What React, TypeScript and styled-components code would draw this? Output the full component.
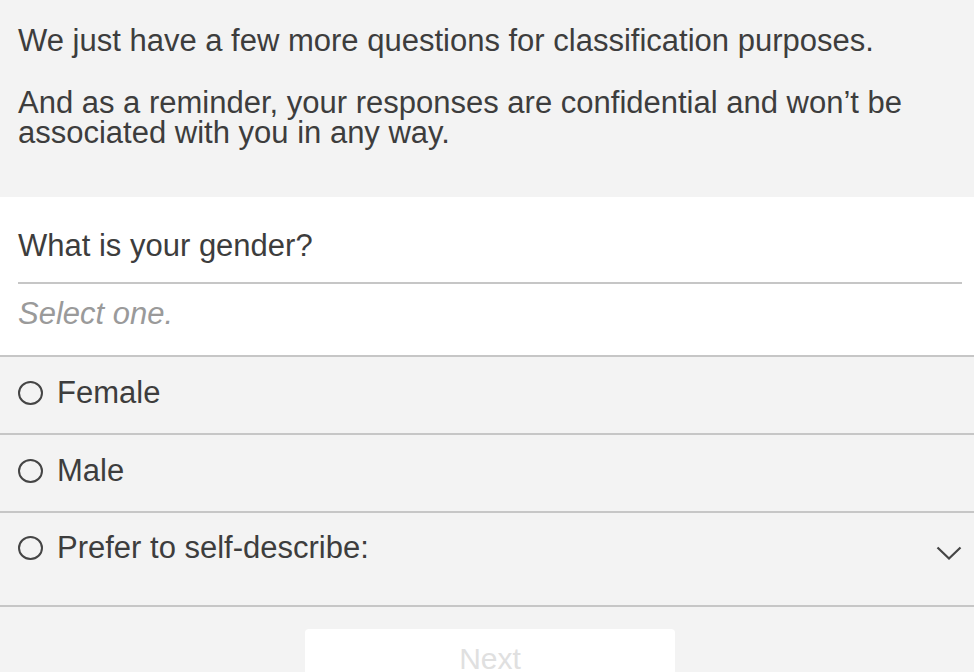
import React from "react";
import styled, { createGlobalStyle } from "styled-components";

const GlobalStyle = createGlobalStyle`
  html, body {
    margin: 0;
    padding: 0;
    background: #f3f3f3;
  }
  body {
    font-family: "Liberation Sans", Arial, Helvetica, sans-serif;
    color: #3d3d3d;
    -webkit-font-smoothing: antialiased;
  }
  * { box-sizing: border-box; }
`;

const Page = styled.div`
  width: 100%;
  background: #f3f3f3;
`;

const Intro = styled.section`
  padding: 26px 18px 48px 18px;
  background: #f3f3f3;
`;

const Para = styled.p`
  margin: 0;
  font-size: 31px;
  line-height: 30.5px;
  & + & {
    margin-top: 31px;
  }
`;

const QuestionBlock = styled.section`
  background: #ffffff;
  padding: 34px 12px 25px 18px;
  border-bottom: 2px solid #c6c6c6;
`;

const QuestionTitle = styled.h2`
  margin: 0;
  font-weight: normal;
  font-size: 31px;
  line-height: 30.5px;
  padding-bottom: 21px;
  border-bottom: 2px solid #c6c6c6;
`;

const Hint = styled.div`
  margin-top: 15px;
  font-size: 31px;
  line-height: 30.5px;
  font-style: italic;
  color: #9a9a9a;
`;

const OptionList = styled.div`
  display: flex;
  flex-direction: column;
`;

const OptionRow = styled.label<{ $tall?: boolean }>`
  display: flex;
  align-items: flex-start;
  padding: ${(p) => (p.$tall ? "20px 12px 42px 18px" : "21px 12px 24.5px 18px")};
  border-bottom: 2px solid #c6c6c6;
  font-size: 31px;
  line-height: 30.5px;
  cursor: pointer;
`;

const Radio = styled.span`
  flex: none;
  width: 25px;
  height: 24px;
  margin-top: 3px;
  margin-right: 14px;
  border: 2px solid #454545;
  border-radius: 50%;
`;

const OptionText = styled.span`
  flex: 1;
`;

const Chevron = styled.svg`
  flex: none;
  width: 26px;
  height: 14px;
  margin-top: 13px;
`;

const Footer = styled.div`
  display: flex;
  justify-content: center;
  padding: 22px 0 0 6px;
`;

const NextButton = styled.button`
  width: 370px;
  border: none;
  border-radius: 4px;
  background: #ffffff;
  color: #e0e0e0;
  font-family: "Liberation Sans", Arial, Helvetica, sans-serif;
  font-size: 30px;
  padding: 15px 0 15px 0;
  line-height: 30px;
  text-align: center;
`;

const options = [
  { label: "Female" },
  { label: "Male" },
  { label: "Prefer to self-describe:", select: true },
];

export default function App() {
  return (
    <Page>
      <GlobalStyle />
      <Intro>
        <Para>We just have a few more questions for classification purposes.</Para>
        <Para>
          And as a reminder, your responses are confidential and won’t be associated with you in any
          way.
        </Para>
      </Intro>
      <QuestionBlock>
        <QuestionTitle>What is your gender?</QuestionTitle>
        <Hint>Select one.</Hint>
      </QuestionBlock>
      <OptionList>
        {options.map((o) => (
          <OptionRow key={o.label} $tall={o.select}>
            <Radio />
            <OptionText>{o.label}</OptionText>
            {o.select && (
              <Chevron viewBox="0 0 26 14" fill="none">
                <path d="M1.5 1.5 L13 12.5 L24.5 1.5" stroke="#454545" strokeWidth="2.2" />
              </Chevron>
            )}
          </OptionRow>
        ))}
      </OptionList>
      <Footer>
        <NextButton disabled>Next</NextButton>
      </Footer>
    </Page>
  );
}
